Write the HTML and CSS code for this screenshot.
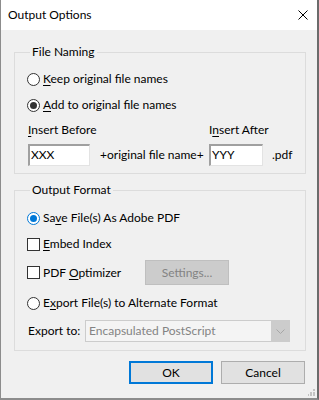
FILE: index.html
```html
<!DOCTYPE html>
<html lang="en">
<head>
  <meta charset="UTF-8" />
  <title>Output Options</title>
  <link rel="stylesheet" href="styles.css">
</head>
<body>
  <div class="dialog">
    <div class="titlebar">
      <span class="title">Output Options</span>
      <svg class="close" width="10" height="10" viewBox="0 0 10 10">
        <path d="M0.5 0.5 L9.5 9.5 M9.5 0.5 L0.5 9.5" stroke="#000" stroke-width="1" fill="none"/>
      </svg>
    </div>

    <div class="content">
      <!-- File naming -->
      <fieldset class="group naming">
        <legend>File Naming</legend>
        <div class="row">
          <span class="radio"></span>
          <span><u>K</u>eep original file names</span>
        </div>
        <div class="row">
          <span class="radio checked"></span>
          <span><u>A</u>dd to original file names</span>
        </div>
        <div class="insert-grid">
          <span class="lbl-before"><u>I</u>nsert Before</span>
          <span class="lbl-after">I<u>n</u>sert After</span>
          <div class="textbox">XXX</div>
          <span class="mid">+original file name+</span>
          <div class="textbox">YYY</div>
          <span class="ext">.pdf</span>
        </div>
      </fieldset>

      <!-- Output format -->
      <fieldset class="group format">
        <legend>Output Format</legend>
        <div class="row">
          <span class="radio checked focus"></span>
          <span>Sa<u>v</u>e File(s) As Adobe PDF</span>
        </div>
        <div class="row">
          <span class="check"></span>
          <span><u>E</u>mbed Index</span>
        </div>
        <div class="row tall">
          <span class="check"></span>
          <span class="opt-label">PDF <u>O</u>ptimizer</span>
          <div class="btn disabled settings">Settings...</div>
        </div>
        <div class="row">
          <span class="radio"></span>
          <span>E<u>x</u>port File(s) to Alternate Format</span>
        </div>
        <div class="row export">
          <span class="export-label">Export to:</span>
          <div class="combo">
            <span class="combo-text">Encapsulated PostScript</span>
            <span class="combo-arrow">
              <svg width="9" height="5" viewBox="0 0 9 5">
                <path d="M0.5 0.5 L4.5 4.5 L8.5 0.5" stroke="#a6a6a6" fill="none"/>
              </svg>
            </span>
          </div>
        </div>
      </fieldset>

      <div class="actions">
        <div class="btn default">OK</div>
        <div class="btn">Cancel</div>
      </div>
    </div>

    <svg class="grip" width="7" height="7" viewBox="0 0 7 7">
      <rect x="5" y="0" width="2" height="2" fill="#c3c3c3"/>
      <rect x="2" y="3" width="2" height="2" fill="#c3c3c3"/>
      <rect x="5" y="3" width="2" height="2" fill="#c3c3c3"/>
      <rect x="-1" y="5" width="2" height="2" fill="#c3c3c3"/>
      <rect x="2" y="5" width="2" height="2" fill="#c3c3c3"/>
      <rect x="5" y="5" width="2" height="2" fill="#c3c3c3"/>
    </svg>
  </div>
</body>
</html>
```

FILE: styles.css
```css
:root {
  --face: #f0f0f0;
  --group-line: #dcdcdc;
  --accent: #0078d7;
  --text: #000;
}

* {
  box-sizing: border-box;
}

body {
  margin: 0;
  font-family: "Segoe UI", Lato, "Noto Sans", sans-serif;
  font-size: 12px;
  line-height: 16px;
  color: var(--text);
  background: #fff;
}

.dialog {
  position: relative;
  width: 319px;
  height: 400px;
  background: var(--face);
  border-left: 1px solid #8c8c8c;
  border-right: 2px solid #6b6b6b;
  border-bottom: 2px solid #8c8c8c;
  display: flex;
  flex-direction: column;
}

.titlebar {
  height: 30px;
  background: #fff;
  display: flex;
  align-items: center;
  justify-content: space-between;
  padding: 0 9px 0 7px;
}

.close {
  display: block;
  margin-bottom: 1px;
}

.content {
  padding: 14px 11px 0 13px;
  display: flex;
  flex-direction: column;
}

.group {
  margin: 0;
  border: 1px solid var(--group-line);
  padding: 9px 12px 7px 12px;
  min-width: 0;
}

.group legend {
  padding: 0 2px;
  margin-left: 3px;
}

.format {
  margin-top: 8px;
  padding-top: 10px;
  padding-bottom: 8px;
}

.row {
  display: flex;
  align-items: center;
  height: 20px;
  margin-bottom: 6px;
  white-space: nowrap;
}

.row.tall {
  height: 25px;
  margin-bottom: 8px;
}

.row.export {
  height: 22px;
  margin-bottom: 0;
  margin-top: 7px;
}

.naming .row:nth-of-type(2) {
  margin-bottom: 7px;
}

.radio {
  width: 13px;
  height: 13px;
  border: 1px solid #333;
  border-radius: 50%;
  background: #fff;
  margin-right: 3px;
  position: relative;
  flex: none;
}

.radio.checked::after {
  content: "";
  position: absolute;
  left: 2px;
  top: 2px;
  width: 7px;
  height: 7px;
  border-radius: 50%;
  background: #333;
}

.radio.focus {
  border-color: var(--accent);
}

.radio.focus::after {
  background: var(--accent);
}

.check {
  width: 13px;
  height: 13px;
  border: 1px solid #333;
  background: #fff;
  margin-right: 3px;
  flex: none;
}

.opt-label {
  width: 102px;
}

u {
  text-decoration-thickness: 1px;
  text-underline-offset: 2px;
}

.insert-grid {
  display: grid;
  grid-template-columns: 62px 119px 54px auto;
  grid-template-rows: 16px 22px;
  row-gap: 6px;
  padding-left: 1px;
  white-space: nowrap;
}

.lbl-before {
  grid-column: 1 / 3;
}

.lbl-after {
  grid-column: 3 / 5;
}

.mid {
  align-self: center;
  padding-left: 10px;
}

.ext {
  align-self: center;
  padding-left: 9px;
}

.textbox {
  background: #fff;
  border-top: 2px solid #a0a0a0;
  border-left: 2px solid #a0a0a0;
  border-right: 1px solid #e3e3e3;
  border-bottom: 1px solid #e3e3e3;
  padding: 1px 0 0 1px;
  line-height: 16px;
}

.btn {
  display: flex;
  align-items: center;
  justify-content: center;
  background: #e1e1e1;
  border: 1px solid #adadad;
  height: 23px;
}

.btn.disabled {
  background: #cccccc;
  border-color: #bfbfbf;
  color: #838383;
}

.settings {
  width: 84px;
  height: 25px;
}

.btn.default {
  border: 2px solid var(--accent);
}

.export-label {
  width: 58px;
  padding-left: 1px;
}

.combo {
  width: 205px;
  height: 22px;
  display: flex;
  border: 1px solid #cccccc;
  background: #f4f4f4;
}

.combo-text {
  flex: 1;
  color: #838383;
  padding-left: 3px;
  line-height: 20px;
}

.combo-arrow {
  width: 18px;
  background: #cccccc;
  display: flex;
  align-items: center;
  justify-content: center;
}

.actions {
  display: flex;
  justify-content: flex-end;
  gap: 8px;
  margin-top: 10px;
  padding-right: 1px;
}

.actions .btn {
  width: 84px;
}

.grip {
  position: absolute;
  right: 2px;
  bottom: 2px;
}
```
